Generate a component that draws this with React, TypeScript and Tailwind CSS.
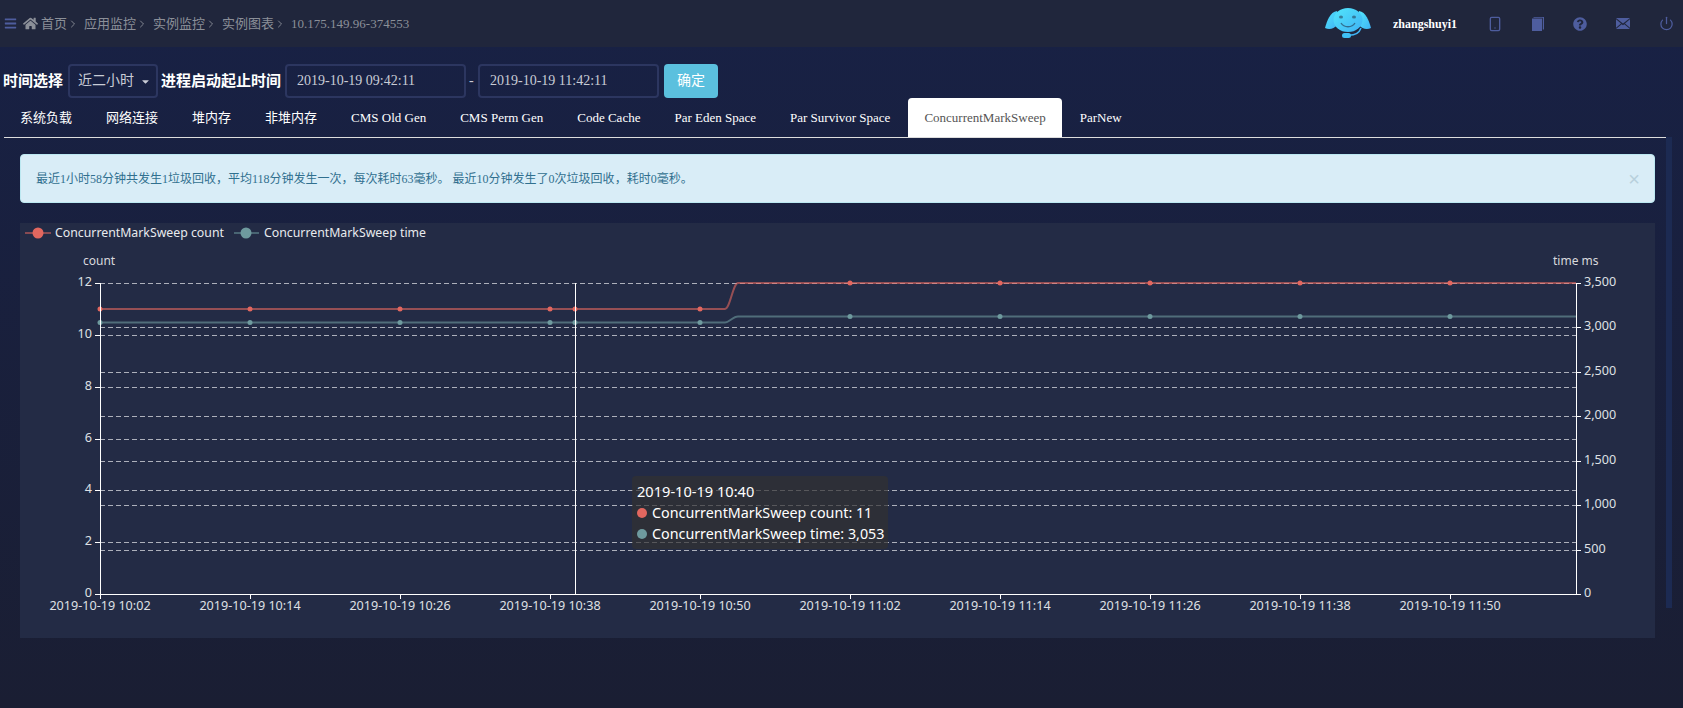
import { FaBars, FaHome, FaQuestionCircle, FaCaretDown } from "react-icons/fa";
import { ChevronRight, Smartphone, Power } from "lucide-react";

const tabs = [
  "系统负载",
  "网络连接",
  "堆内存",
  "非堆内存",
  "CMS Old Gen",
  "CMS Perm Gen",
  "Code Cache",
  "Par Eden Space",
  "Par Survivor Space",
  "ConcurrentMarkSweep",
  "ParNew",
];

const crumbs = ["首页", "应用监控", "实例监控", "实例图表"];

const leftTicks = [
  { label: "12", y: 283 },
  { label: "10", y: 335 },
  { label: "8", y: 387 },
  { label: "6", y: 439 },
  { label: "4", y: 490 },
  { label: "2", y: 542 },
  { label: "0", y: 594 },
];

const rightTicks = [
  { label: "3,500", y: 283 },
  { label: "3,000", y: 327 },
  { label: "2,500", y: 372 },
  { label: "2,000", y: 416 },
  { label: "1,500", y: 461 },
  { label: "1,000", y: 505 },
  { label: "500", y: 550 },
  { label: "0", y: 594 },
];

const xTicks = [
  { label: "2019-10-19 10:02", x: 100 },
  { label: "2019-10-19 10:14", x: 250 },
  { label: "2019-10-19 10:26", x: 400 },
  { label: "2019-10-19 10:38", x: 550 },
  { label: "2019-10-19 10:50", x: 700 },
  { label: "2019-10-19 11:02", x: 850 },
  { label: "2019-10-19 11:14", x: 1000 },
  { label: "2019-10-19 11:26", x: 1150 },
  { label: "2019-10-19 11:38", x: 1300 },
  { label: "2019-10-19 11:50", x: 1450 },
];

const RED = "#e2675f";
const TEAL = "#6e9a9e";

function Avatar() {
  return (
    <svg width="46" height="32" viewBox="0 0 46 32">
      <defs>
        <linearGradient id="face" x1="0" y1="0" x2="1" y2="1">
          <stop offset="0" stopColor="#52e6fb" />
          <stop offset="1" stopColor="#3fb2f5" />
        </linearGradient>
      </defs>
      <path d="M12 3 C5 4 2 13 0 20 C4 22 9 21 12 17 Z" fill="url(#face)" />
      <path d="M34 3 C41 4 44 13 46 20 C42 22 37 21 34 17 Z" fill="url(#face)" />
      <ellipse cx="23" cy="12" rx="14.5" ry="12" fill="url(#face)" />
      <path d="M20 27 C28 28 34 26 36 20" fill="none" stroke="#3fb4f5" strokeWidth="1.5" />
      <rect x="17" y="25" width="9" height="5" rx="2.5" fill="#3fc0f5" />
      <ellipse cx="16" cy="9" rx="2" ry="1.5" fill="#20263c" opacity="0.5" />
      <ellipse cx="29" cy="9" rx="2" ry="1.5" fill="#20263c" opacity="0.5" />
      <path d="M16 15 C19 20 27 20 30 15" fill="none" stroke="#20263c" strokeOpacity="0.55" strokeWidth="1.4" />
    </svg>
  );
}

function BookIcon() {
  return (
    <svg width="12" height="14" viewBox="0 0 12 14" fill="#4e5d9e">
      <path d="M0 1.5 H10 V14 H0 Z" />
      <path d="M1.5 0 H12 V12.5 H10.8 V0.8 H1.5 Z" />
    </svg>
  );
}

function MailIcon() {
  return (
    <svg width="14" height="11" viewBox="0 0 14 11" fill="#4e5d9e">
      <path d="M0 0 H14 L7 5.6 Z" />
      <path d="M0 1.3 V9.7 L5 5.4 Z" />
      <path d="M14 1.3 V9.7 L9 5.4 Z" />
      <path d="M0 11 L5.7 6.2 L7 7.2 L8.3 6.2 L14 11 Z" />
    </svg>
  );
}

function Chart() {
  return (
    <svg className="block" width="1635" height="415" viewBox="20 223 1635 415" fontFamily="'Noto Sans', sans-serif" fontSize="12.6">
      {/* legend */}
      <line x1="25" x2="51" y1="233" y2="233" stroke={RED} strokeOpacity="0.7" strokeWidth="1.5" />
      <circle cx="38" cy="233" r="5.5" fill={RED} />
      <text x="55" y="237" fontSize="12.3" fill="#e8eaee">ConcurrentMarkSweep count</text>
      <line x1="234" x2="259" y1="233" y2="233" stroke={TEAL} strokeOpacity="0.7" strokeWidth="1.5" />
      <circle cx="246" cy="233" r="5.5" fill={TEAL} />
      <text x="264" y="237" fontSize="12.3" fill="#e8eaee">ConcurrentMarkSweep time</text>

      {/* axis names */}
      <text x="83" y="265" fontSize="12" fill="#d8d9dd">count</text>
      <text x="1553" y="265" fontSize="12" fill="#d8d9dd">time ms</text>

      {/* grid */}
      {leftTicks.slice(0, -1).map((t) => (
        <line key={t.label} x1="100" x2="1576" y1={t.y + 0.5} y2={t.y + 0.5} stroke="#cfd2d8" strokeOpacity="0.8" strokeDasharray="5 3" />
      ))}
      {rightTicks.slice(1, -1).map((t) => (
        <line key={t.label} x1="100" x2="1576" y1={t.y + 0.5} y2={t.y + 0.5} stroke="#cfd2d8" strokeOpacity="0.8" strokeDasharray="5 3" />
      ))}

      {/* series */}
      <path d="M100 309 H725 C730 309 733 283 738 283 H1576" fill="none" stroke={RED} strokeOpacity="0.6" strokeWidth="2" />
      <path d="M100 322.5 H725 C729 322.5 733 316.5 738 316.5 H1576" fill="none" stroke={TEAL} strokeOpacity="0.6" strokeWidth="2" />
      {[100, 250, 400, 550, 575, 700].map((x) => (
        <circle key={x} cx={x} cy="309" r="2.5" fill={RED} />
      ))}
      {[850, 1000, 1150, 1300, 1450].map((x) => (
        <circle key={x} cx={x} cy="283" r="2.5" fill={RED} />
      ))}
      {[100, 250, 400, 550, 575, 700].map((x) => (
        <circle key={x} cx={x} cy="322.5" r="2.5" fill={TEAL} />
      ))}
      {[850, 1000, 1150, 1300, 1450].map((x) => (
        <circle key={x} cx={x} cy="316.5" r="2.5" fill={TEAL} />
      ))}

      {/* crosshair */}
      <line x1="575.5" x2="575.5" y1="283" y2="594" stroke="#fff" />

      {/* axes */}
      <line x1="100.5" x2="100.5" y1="283" y2="599" stroke="#fff" />
      <line x1="1576.5" x2="1576.5" y1="283" y2="594" stroke="#fff" />
      <line x1="100" x2="1577" y1="594.5" y2="594.5" stroke="#fff" />
      {leftTicks.map((t) => (
        <g key={t.label}>
          <line x1="95" x2="100" y1={t.y + 0.5} y2={t.y + 0.5} stroke="#fff" />
          <text x="92" y={t.y + 3} textAnchor="end" fill="#dfe0e4">{t.label}</text>
        </g>
      ))}
      {rightTicks.map((t) => (
        <g key={t.label}>
          <line x1="1577" x2="1581" y1={t.y + 0.5} y2={t.y + 0.5} stroke="#fff" />
          <text x="1584" y={t.y + 3} fill="#dfe0e4">{t.label}</text>
        </g>
      ))}
      {xTicks.map((t) => (
        <g key={t.label}>
          <line x1={t.x + 0.5} x2={t.x + 0.5} y1="594" y2="599" stroke="#fff" />
          <text x={t.x} y="610" textAnchor="middle" fill="#dfe0e4">{t.label}</text>
        </g>
      ))}
    </svg>
  );
}

export default function App() {
  return (
    <div className="relative h-[708px] overflow-hidden bg-gradient-to-b from-[#182145] to-[#1a1e33] font-['Liberation_Serif','Noto_Sans_CJK_SC',serif]">
      {/* header */}
      <div className="flex h-[47px] items-center bg-[#20263c] pl-1 pr-[9px]">
        <FaBars className="text-[13px] text-[#4e5d9e]" />
        <FaHome className="ml-[6px] text-[15px] text-[#8b8f98]" />
        <div className="ml-[3px] flex items-center text-[13px] text-[#8b8f98]">
          {crumbs.map((c) => (
            <span key={c} className="mr-[5px] flex items-center">
              {c}
              <ChevronRight size={12} strokeWidth={1.8} />
            </span>
          ))}
          <span>10.175.149.96-374553</span>
        </div>
        <div className="ml-auto flex items-center">
          <Avatar />
          <span className="ml-[22px] mr-[30px] text-xs font-bold text-white">zhangshuyi1</span>
          <div className="flex w-[187px] items-center justify-between text-[#4e5d9e]">
            <Smartphone size={16} strokeWidth={2} />
            <BookIcon />
            <FaQuestionCircle className="text-[14px]" />
            <MailIcon />
            <Power size={15} strokeWidth={2} />
          </div>
        </div>
      </div>

      {/* filter row */}
      <div className="mt-[17px] flex h-[34px] items-center pl-[3px]">
        <span className="text-[15px] font-bold text-white">时间选择</span>
        <div className="ml-[5px] flex h-[34px] w-[90px] items-center justify-between rounded border-2 border-[#2c3660] pl-2 pr-[5px] text-sm text-[#c9ccd6]">
          近二小时
          <FaCaretDown className="text-[11px]" />
        </div>
        <span className="ml-[3px] text-[15px] font-bold text-white">进程启动起止时间</span>
        <div className="ml-[4px] flex h-[34px] w-[181px] items-center rounded border-2 border-[#2c3660] pl-[10px] text-sm text-[#c9ccd6]">
          2019-10-19 09:42:11
        </div>
        <span className="ml-[3px] mr-[4px] w-[5px] text-sm text-[#c9ccd6]">-</span>
        <div className="flex h-[34px] w-[181px] items-center rounded border-2 border-[#2c3660] pl-[10px] text-sm text-[#c9ccd6]">
          2019-10-19 11:42:11
        </div>
        <button className="ml-[5px] h-[34px] w-[54px] rounded bg-[#5bc0de] text-sm text-white">确定</button>
      </div>

      {/* tabs */}
      <div className="ml-1 mr-[11px] flex h-[40px] border-b border-[#ddd]">
        {tabs.map((t) =>
          t === "ConcurrentMarkSweep" ? (
            <div key={t} className="mr-[2px] flex h-[39px] items-center rounded-t bg-white px-4 text-[13px] text-[#555]">
              {t}
            </div>
          ) : (
            <div key={t} className="mr-[2px] flex h-[39px] items-center px-4 text-[13px] text-white">
              {t}
            </div>
          )
        )}
      </div>

      {/* alert */}
      <div className="relative mx-5 mt-[16px] flex h-[49px] w-[1635px] items-center justify-between rounded border border-[#bce8f1] bg-[#d9edf7] pl-[15px] pr-[14px] text-xs text-[#31708f]">
        <span>最近1小时58分钟共发生1垃圾回收{"\uFF0C"}平均118分钟发生一次{"\uFF0C"}每次耗时63毫秒。 最近10分钟发生了0次垃圾回收{"\uFF0C"}耗时0毫秒。</span>
        <span className="font-['Liberation_Sans',sans-serif] text-xl leading-none text-[#b8d0dc]">×</span>
      </div>

      {/* chart panel */}
      <div className="relative mx-5 mt-[20px] h-[415px] w-[1635px] bg-[#232b45]">
        <Chart />
        <div className="absolute left-[612px] top-[253px] h-[73px] w-[256px] rounded bg-[#323232]/70 p-[5px] font-['Noto_Sans',sans-serif] text-[14.3px] leading-[21px] text-white">
          <div className="text-[14.6px]">2019-10-19 10:40</div>
          <div className="flex items-center whitespace-nowrap">
            <span className="mr-[5px] h-[10px] w-[10px] shrink-0 rounded-full bg-[#e2675f]" />
            ConcurrentMarkSweep count: 11
          </div>
          <div className="flex items-center whitespace-nowrap">
            <span className="mr-[5px] h-[10px] w-[10px] shrink-0 rounded-full bg-[#6e9a9e]" />
            ConcurrentMarkSweep time: 3,053
          </div>
        </div>
      </div>

      {/* page scroll strip */}
      <div className="absolute right-[11px] top-[137px] h-[471px] w-[6px] bg-[#1c2a52]" />
    </div>
  );
}
